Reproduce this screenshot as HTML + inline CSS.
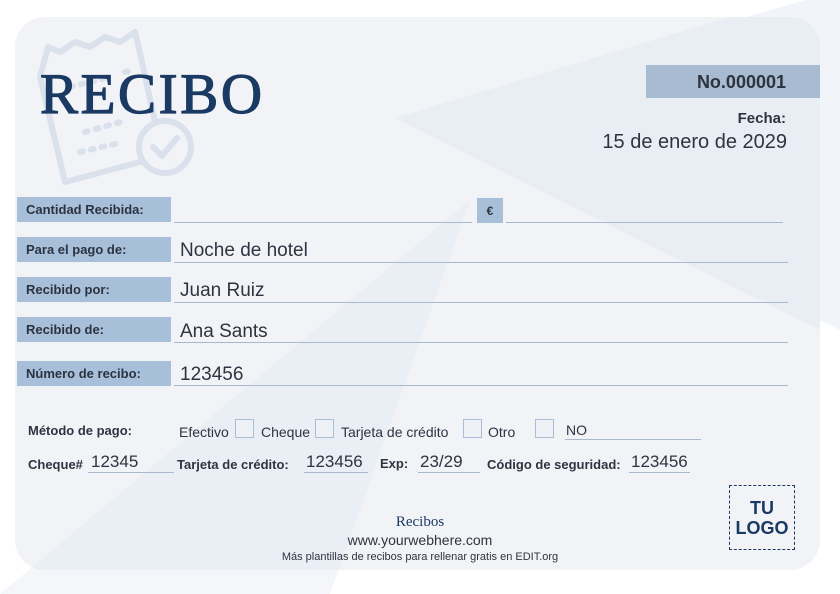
<!DOCTYPE html>
<html><head><meta charset="utf-8"><style>
*{margin:0;padding:0;box-sizing:border-box}
body{width:840px;height:594px;background:#fff;position:relative;overflow:hidden;font-family:"Liberation Sans",sans-serif;color:#2e3440}
.card{position:absolute;left:15px;top:17px;width:805px;height:553px;border-radius:30px;background:#f1f3f7;overflow:hidden}
.abs{position:absolute}
.lab{position:absolute;left:17px;width:154px;height:25px;background:#a8bfd9;font-weight:bold;font-size:13px;padding-left:9px;line-height:25px;color:#2b3340}
.line{position:absolute;height:1px;background:#a9b8cc}
.val{position:absolute;font-size:19px;color:#2e3440}
.sm{position:absolute;font-size:14px;color:#2e3440}
.b{font-weight:bold;font-size:13px}
.cb{position:absolute;width:19px;height:19px;border:1px solid #a9bdd5;background:#eef2f7}
</style></head><body>
<svg class="abs" style="left:0;top:0" width="840" height="594">
<polygon points="395,118 840,-10 840,330" fill="#f1f4f9"/>
<polygon points="0,594 470,200 330,594" fill="#f4f6fa"/>
</svg>
<div class="card">
<svg class="abs" style="left:0;top:0" width="805" height="553">
<polygon points="380,101 805,-27 805,313" fill="#e9edf4"/>
<polygon points="-15,577 455,183 315,577" fill="#eaeef5"/>
</svg>
<svg class="abs" style="left:5px;top:5px" width="175" height="180" fill="none" stroke="#dae1ec" stroke-width="6" stroke-linecap="round" stroke-linejoin="round">
<path d="M20 55 L28 25 L40 30 L55 20 L70 25 L85 15 L100 20 L115 10 L118 22 L135 100 M20 55 L45 160 L120 140"/>
<path d="M50 65 L90 55 M105 50 L113 48 M65 110 L100 100 M60 130 L95 122" stroke-dasharray="3 8"/>
<circle cx="145" cy="125" r="26"/>
<path d="M133 125 L142 134 L157 116"/>
</svg>
</div>
<div class="abs" style="left:40px;top:62px;font-family:'Liberation Serif',serif;font-size:57px;color:#1b3a63;-webkit-text-stroke:1.2px #1b3a63;letter-spacing:2.6px">RECIBO</div>
<div class="abs" style="left:646px;top:65px;width:174px;height:33px;background:#a8bbd0;text-align:right;padding-right:34px;line-height:35px;font-weight:bold;font-size:18px;color:#2d3440">No.000001</div>
<div class="abs b" style="right:54px;top:110px;font-size:15px">Fecha:</div>
<div class="abs" style="right:53px;top:131px;font-size:20px">15 de enero de 2029</div>

<div class="lab" style="top:197px">Cantidad Recibida:</div>
<div class="line" style="left:174px;top:222px;width:298px"></div>
<div class="abs" style="left:477px;top:198px;width:26px;height:25px;background:#a8bfd9;font-weight:bold;font-size:12px;line-height:26px;text-align:center">€</div>
<div class="line" style="left:506px;top:222px;width:277px"></div>

<div class="lab" style="top:237px">Para el pago de:</div>
<div class="val" style="left:180px;top:240px">Noche de hotel</div>
<div class="line" style="left:174px;top:262px;width:614px"></div>
<div class="lab" style="top:277px">Recibido por:</div>
<div class="val" style="left:180px;top:280px">Juan Ruiz</div>
<div class="line" style="left:174px;top:302px;width:614px"></div>
<div class="lab" style="top:317px">Recibido de:</div>
<div class="val" style="left:180px;top:321px">Ana Sants</div>
<div class="line" style="left:174px;top:342px;width:614px"></div>
<div class="lab" style="top:361px">Número de recibo:</div>
<div class="val" style="left:180px;top:364px">123456</div>
<div class="line" style="left:174px;top:385px;width:614px"></div>

<div class="sm b" style="left:28px;top:423px">Método de pago:</div>
<div class="sm" style="left:179px;top:424px">Efectivo</div>
<div class="cb" style="left:235px;top:419px"></div>
<div class="sm" style="left:261px;top:424px">Cheque</div>
<div class="cb" style="left:315px;top:419px"></div>
<div class="sm" style="left:341px;top:424px">Tarjeta de crédito</div>
<div class="cb" style="left:463px;top:419px"></div>
<div class="sm" style="left:488px;top:424px">Otro</div>
<div class="cb" style="left:535px;top:419px"></div>
<div class="sm" style="left:566px;top:422px">NO</div>
<div class="line" style="left:565px;top:439px;width:136px"></div>

<div class="sm b" style="left:28px;top:457px">Cheque#</div>
<div class="val" style="left:91px;top:452px;font-size:17px">12345</div>
<div class="line" style="left:88px;top:472px;width:86px"></div>
<div class="sm b" style="left:177px;top:457px">Tarjeta de crédito:</div>
<div class="val" style="left:306px;top:452px;font-size:17px">123456</div>
<div class="line" style="left:304px;top:472px;width:64px"></div>
<div class="sm b" style="left:380px;top:456px">Exp:</div>
<div class="val" style="left:420px;top:452px;font-size:17px">23/29</div>
<div class="line" style="left:418px;top:472px;width:62px"></div>
<div class="sm b" style="left:487px;top:457px">Código de seguridad:</div>
<div class="val" style="left:631px;top:452px;font-size:17px">123456</div>
<div class="line" style="left:629px;top:472px;width:61px"></div>

<div class="abs" style="left:729px;top:485px;width:66px;height:65px;border:1.5px dashed #1b3a63;text-align:center;font-weight:bold;font-size:18px;line-height:20px;padding-top:12px;color:#1b3a63">TU<br>LOGO</div>

<div class="abs" style="left:0;width:840px;top:514px;text-align:center;font-family:'Liberation Serif',serif;font-size:15px;color:#1b3a63">Recibos</div>
<div class="abs" style="left:0;width:840px;top:532px;text-align:center;font-size:14px">www.yourwebhere.com</div>
<div class="abs" style="left:0;width:840px;top:551px;text-align:center;font-size:11px">Más plantillas de recibos para rellenar gratis en EDIT.org</div>
</body></html>
